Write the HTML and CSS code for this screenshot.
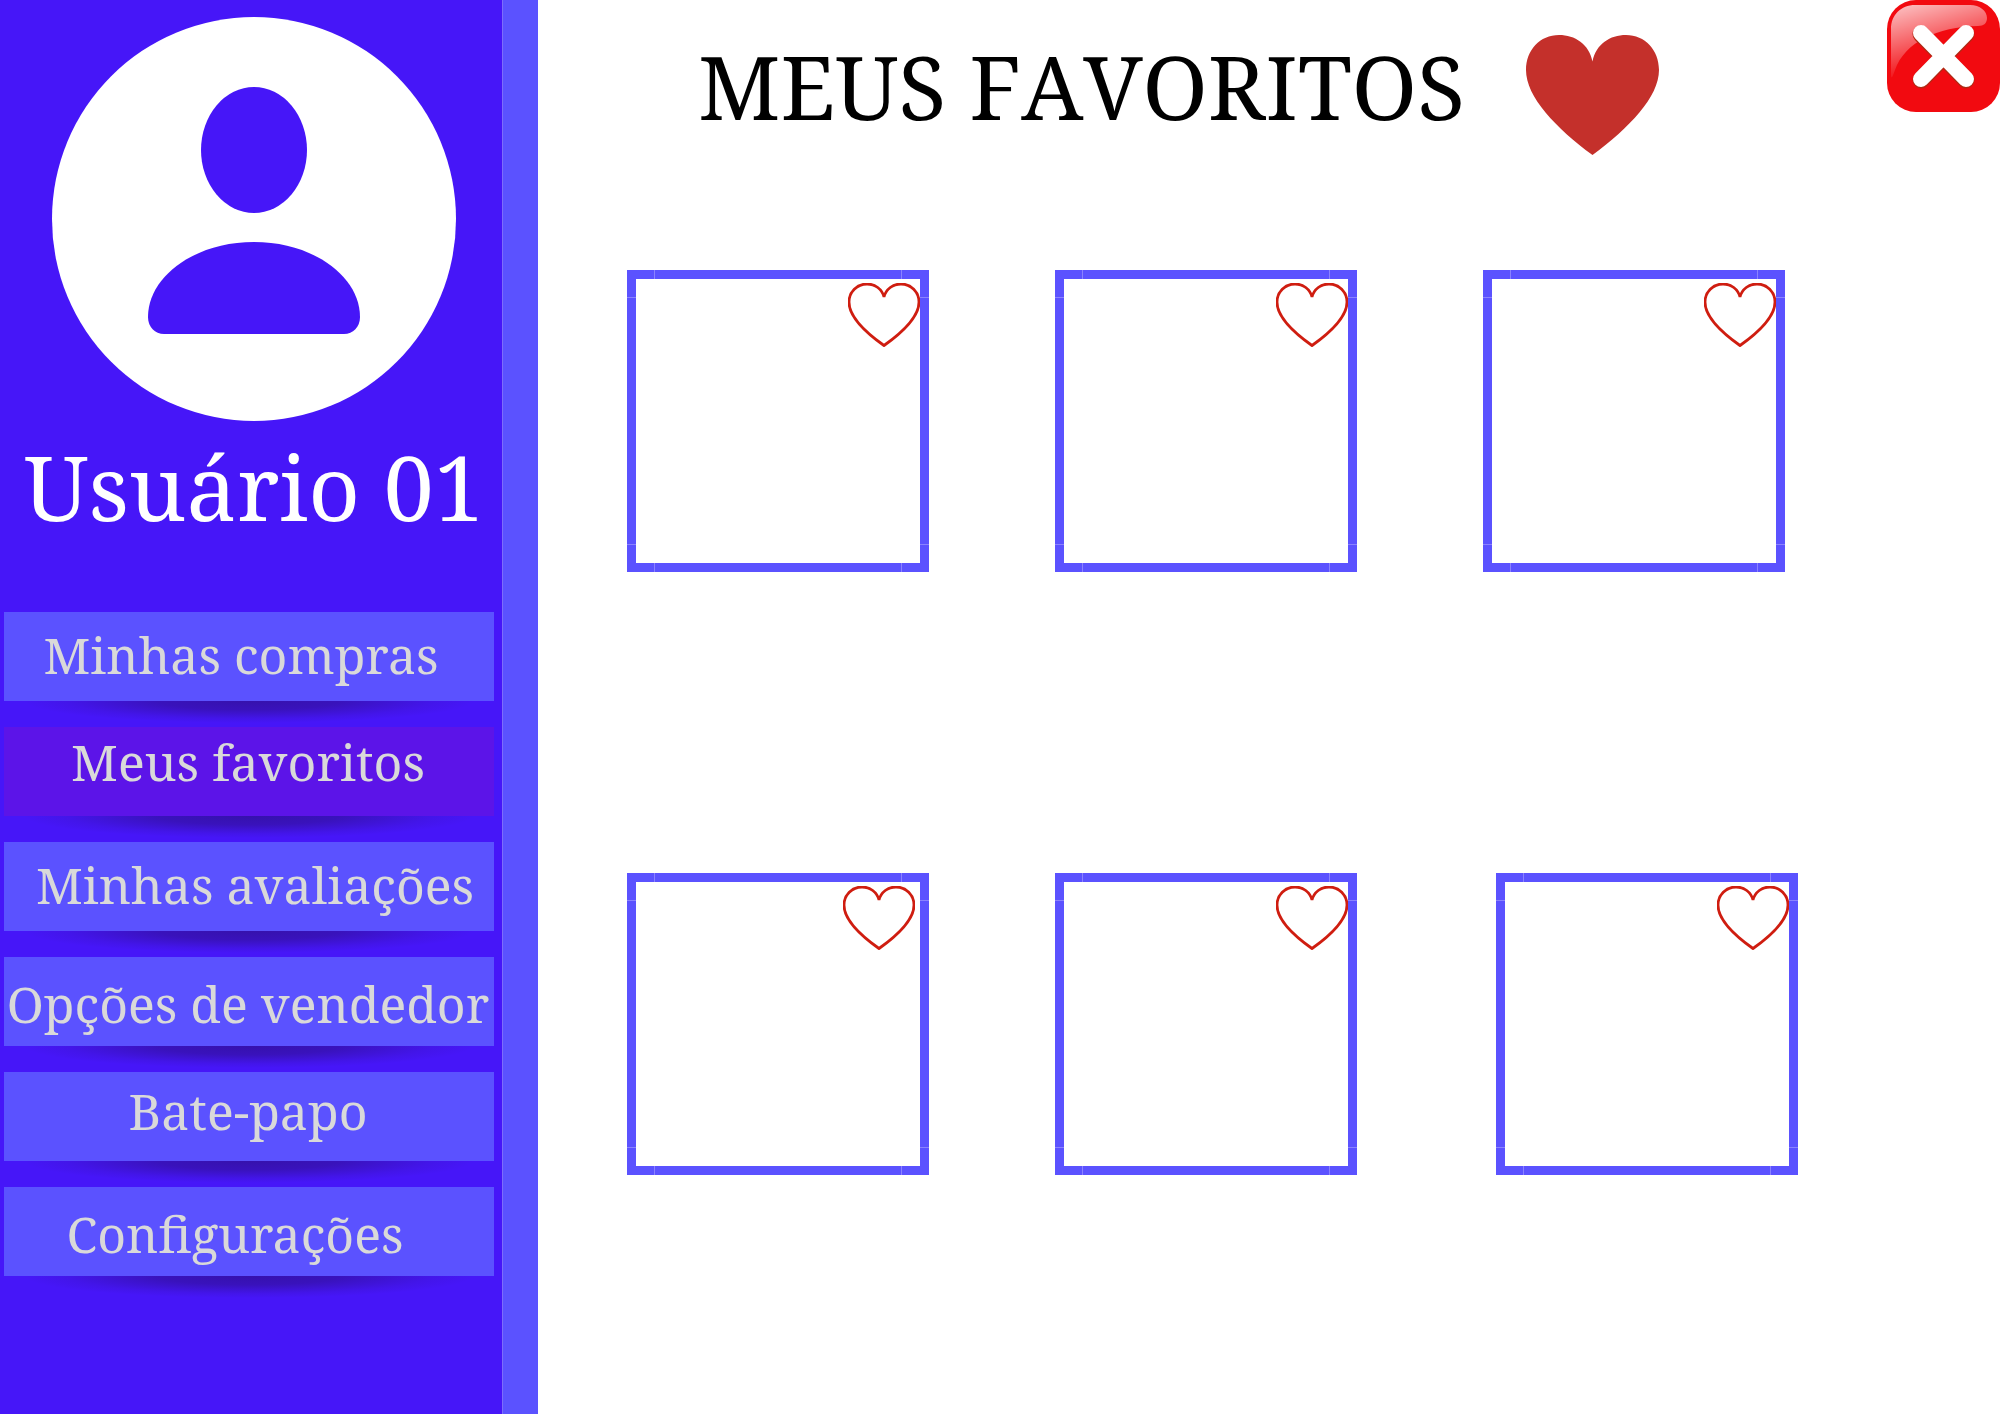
FILE: index.html
```html
<!DOCTYPE html>
<html lang="pt-BR">
<head>
<meta charset="utf-8">
<meta name="viewport" content="width=device-width, initial-scale=1">
<title>Meus favoritos</title>
<link rel="stylesheet" href="styles.css">
</head>
<body>
<svg class="defs" aria-hidden="true">
  <symbol id="heart-outline" viewBox="0 0 72 64">
    <path d="M36 14C34 6 27 1 19 1C9 1 1 9 1 19C1 33 17 49 36 62.500C55 49 71 33 71 19C71 9 63 1 53 1C45 1 38 6 36 14Z" fill="none" stroke="#cf1d10" stroke-width="2.800"/>
  </symbol>
</svg>
<div class="page">
  <aside class="sidebar">
    <svg class="avatar" viewBox="0 0 404 404" role="img" aria-label="Foto do usuário">
      <circle cx="202" cy="202" r="202" fill="#fff"/>
      <ellipse cx="202" cy="133" rx="53" ry="63" fill="#4616f8"/>
      <path d="M96 300C96 260 142 225 202 225C262 225 308 260 308 300C308 310 301 317 292 317H112C103 317 96 310 96 300Z" fill="#4616f8"/>
    </svg>
    <p class="user-name">Usuário 01</p>
    <nav class="menu">
      <a class="menu-link menu-link--left" href="#compras">Minhas compras</a>
      <a class="menu-link menu-link--active" href="#favoritos" aria-current="page">Meus favoritos</a>
      <a class="menu-link menu-link--right" href="#avaliacoes">Minhas avaliações</a>
      <a class="menu-link menu-link--low" href="#vendedor">Opções de vendedor</a>
      <a class="menu-link menu-link--high" href="#bate-papo">Bate-papo</a>
      <a class="menu-link menu-link--low menu-link--far-left" href="#configuracoes">Configurações</a>
    </nav>
  </aside>
  <main class="content">
    <header class="header">
      <h1 class="title">MEUS FAVORITOS</h1>
      <svg class="title-heart" viewBox="0 0 133 120" aria-hidden="true">
        <path d="M66.500 26.500C63 9 49 0 33 0C14 0 0 15 0 35C0 62 30 93 66.500 120C103 93 133 62 133 35C133 15 119 0 100 0C84 0 70 9 66.500 26.500Z" fill="#c4302b"/>
      </svg>
      <button class="close" type="button" aria-label="Fechar">
        <svg viewBox="0 0 113 112" aria-hidden="true">
          <defs>
            <linearGradient id="gloss" gradientUnits="userSpaceOnUse" x1="10" y1="5" x2="30" y2="77">
              <stop offset="0" stop-color="#fff" stop-opacity=".75"/>
              <stop offset="1" stop-color="#fff" stop-opacity="0"/>
            </linearGradient>
          </defs>
          <rect width="113" height="112" rx="29" fill="#f20a10"/>
          <path d="M4 76V29C4 15 14 5 28 5H83C93 5 100 11 100 18C100 23 97 26 91 26C50 27 18 42 8 70C6 75 5 80 4 76Z" fill="url(#gloss)"/>
          <path d="M34 34L79 80M79 34L34 80" stroke="#b02a14" stroke-width="17" stroke-linecap="round"/>
          <path d="M34 33L79 79M79 33L34 79" stroke="#fff" stroke-width="16" stroke-linecap="round"/>
        </svg>
      </button>
    </header>
    <section class="cards" aria-label="Produtos favoritos">
      <article class="card"><button class="like" type="button" aria-label="Favorito"><svg><use href="#heart-outline"/></svg></button></article>
      <article class="card"><button class="like" type="button" aria-label="Favorito"><svg><use href="#heart-outline"/></svg></button></article>
      <article class="card"><button class="like" type="button" aria-label="Favorito"><svg><use href="#heart-outline"/></svg></button></article>
      <article class="card card--inset"><button class="like" type="button" aria-label="Favorito"><svg><use href="#heart-outline"/></svg></button></article>
      <article class="card"><button class="like" type="button" aria-label="Favorito"><svg><use href="#heart-outline"/></svg></button></article>
      <article class="card card--shifted"><button class="like" type="button" aria-label="Favorito"><svg><use href="#heart-outline"/></svg></button></article>
    </section>
  </main>
</div>
</body>
</html>
```
FILE: styles.css
```css
* {
  box-sizing: border-box;
}

body {
  margin: 0;
  background: #fff;
  font-family: "Noto Serif", "Droid Serif", "Liberation Serif", serif;
}

.defs {
  display: none;
}

.page {
  display: flex;
  min-height: 100vh;
}

/* Sidebar */
.sidebar {
  flex: none;
  width: 538px;
  padding: 17px 8px 48px 4px;
  border-right: 35px solid #5b52ff;
  background: #4616f8;
  box-shadow: inset -1px 0 #7d6cfb;
}

.avatar {
  display: block;
  width: 404px;
  height: 404px;
  margin-left: 48px;
}

.user-name {
  margin: 0 0 61px;
  padding-left: 20px;
  color: #fff;
  font-size: 90px;
  line-height: 130px;
  white-space: nowrap;
}

.menu {
  display: flex;
  flex-direction: column;
  gap: 26px;
}

.menu-link {
  position: relative;
  display: block;
  width: 490px;
  height: 89px;
  padding-top: 8px;
  padding-right: 2px;
  background: #5b52ff;
  color: #d9d9d9;
  font-size: 50px;
  line-height: 70px;
  text-align: center;
  text-decoration: none;
  white-space: nowrap;
}

.menu-link::after {
  content: "";
  position: absolute;
  top: 100%;
  left: 0;
  width: 100%;
  height: 22px;
  background: radial-gradient(ellipse 46% 100% at 50% 0, rgba(30, 10, 60, 0.4), rgba(30, 10, 60, 0.32) 40%, rgba(30, 10, 60, 0.08) 80%, rgba(30, 10, 60, 0));
}

.menu-link--active {
  padding-top: 0;
  background: #5c14e8;
}

.menu-link--high {
  padding-top: 4px;
}

.menu-link--low {
  padding-top: 12px;
}

.menu-link--left {
  padding-right: 16px;
}

.menu-link--far-left {
  padding-right: 28px;
}

.menu-link--right {
  padding-left: 14px;
}

/* Content */
.content {
  flex: 1;
  min-width: 0;
}

.header {
  display: flex;
  align-items: flex-start;
  height: 270px;
  padding-left: 160px;
}

.title {
  margin: 26px 61px 0 0;
  color: #000;
  font-size: 88px;
  font-weight: 400;
  font-kerning: none;
  line-height: 120px;
  white-space: nowrap;
}

.title-heart {
  flex: none;
  width: 133px;
  height: 120px;
  margin-top: 35px;
}

.close {
  flex: none;
  width: 113px;
  height: 112px;
  margin-left: auto;
  padding: 0;
  border: 0;
  background: none;
}

.close svg {
  display: block;
  width: 100%;
  height: 100%;
}

.cards {
  display: grid;
  grid-template-columns: repeat(3, minmax(0, 1fr));
  gap: 301px 126px;
  padding: 0 215px 48px 89px;
}

/* The frame is the border area, with a thin seam near each corner */
.card {
  display: flex;
  align-items: flex-start;
  justify-content: flex-end;
  aspect-ratio: 1;
  padding-top: 4px;
  border: 9px solid transparent;
  background:
    linear-gradient(#fff, #fff) padding-box,
    linear-gradient(90deg, transparent 27px, #8a82ff 27px 28px, transparent 28px calc(100% - 28px), #8a82ff calc(100% - 28px) calc(100% - 27px), transparent calc(100% - 27px)) border-box,
    linear-gradient(transparent 27px, #8a82ff 27px 28px, transparent 28px calc(100% - 28px), #8a82ff calc(100% - 28px) calc(100% - 27px), transparent calc(100% - 27px)) border-box,
    linear-gradient(#5b52ff, #5b52ff) border-box;
}

.card--inset {
  padding-right: 5px;
}

.card--shifted {
  margin-right: -13px;
  margin-left: 13px;
}

.like {
  width: 72px;
  height: 64px;
  padding: 0;
  border: 0;
  background: none;
}

.like svg {
  display: block;
  width: 100%;
  height: 100%;
}
```
